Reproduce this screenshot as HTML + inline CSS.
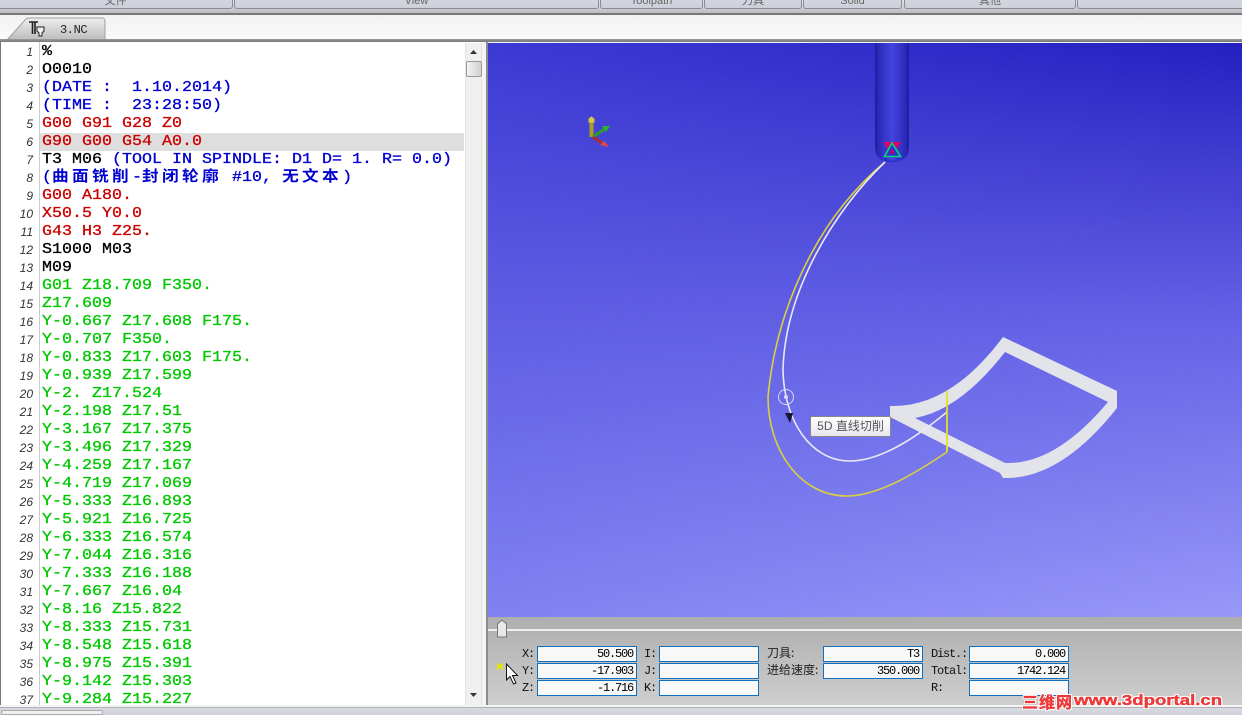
<!DOCTYPE html>
<html><head><meta charset="utf-8"><style>
html,body{margin:0;padding:0;background:#f0f0f0}
#r{position:relative;width:1242px;height:715px;overflow:hidden;background:#f4f4f4;font-family:"Liberation Sans","Noto Sans CJK SC",sans-serif}
.a{position:absolute}
.b{position:absolute;top:-8px;height:15px;background:linear-gradient(#d8dae2,#cdd0da);border:1px solid #8a8c94;border-radius:0 0 3px 3px;box-sizing:content-box;text-align:center;font-size:11px;line-height:17px;color:#666;overflow:hidden}
#code{position:absolute;left:42px;top:43px;width:382px;font:15px/18px "Liberation Mono","Noto Sans CJK SC",monospace;white-space:pre;-webkit-text-stroke:.3px currentColor;transform:scaleX(1.111);transform-origin:0 0}
#code div{height:18px}
.k{color:#000}.u{color:#0000d0}.e{color:#cc0000}.g{color:#00c800}
.cj{font-size:15px;letter-spacing:3px;font-weight:700;-webkit-text-stroke:0}
#nums{position:absolute;left:0;top:43px;width:33px;text-align:right;font:italic 12px/18px "Liberation Sans",sans-serif;color:#333}
.f{position:absolute;box-sizing:border-box;height:16px;border:1.5px solid #1070c0;background:#f8f8f8;font:12px/14px "Liberation Mono","Noto Sans CJK SC",monospace;letter-spacing:-1.2px;text-align:right;padding-right:3px;color:#000;overflow:hidden}
.l{position:absolute;font:12px/14px "Liberation Mono","Noto Sans CJK SC",monospace;letter-spacing:-1.2px;color:#111;white-space:pre}
.lc{font:12px/14px "Noto Sans CJK SC",sans-serif;letter-spacing:0;color:#222}
.w{position:absolute;font-weight:bold;color:#f03c3c;-webkit-text-stroke:.3px #e01818;text-shadow:1px 0 #fff,-1px 0 #fff,0 1px #fff,0 -1px #fff,1px 1px #fff,-1px -1px #fff,1px -1px #fff,-1px 1px #fff;white-space:nowrap}
</style></head><body><div id="r">

<!-- top toolbar -->
<div class="a" style="left:0;top:0;width:1242px;height:14px;background:linear-gradient(#e6e6ea,#b8b8be)"></div>
<div class="b" style="left:-2px;width:233px">文件</div>
<div class="b" style="left:234px;width:363px">View</div>
<div class="b" style="left:600px;width:101px">Toolpath</div>
<div class="b" style="left:704px;width:96px">刀具</div>
<div class="b" style="left:803px;width:97px">Solid</div>
<div class="b" style="left:904px;width:170px">其他</div>
<div class="b" style="left:1077px;width:170px"></div>
<div class="a" style="left:0;top:13px;width:1242px;height:2px;background:#777"></div>

<!-- tab strip -->
<div class="a" style="left:0;top:15px;width:1242px;height:25px;background:linear-gradient(#f2f2f2,#fafafa)"></div>
<svg class="a" style="left:0;top:15px" width="110" height="27"><defs><linearGradient id="tb" x1="0" x2="0" y1="0" y2="1"><stop offset="0" stop-color="#eeeeee"/><stop offset="1" stop-color="#bcbcbc"/></linearGradient></defs><path d="M7 25 L26 4 Q27 3 30 3 L102 3 Q105 3 105 6 L105 25 Z" fill="url(#tb)" stroke="#a0a0a4"/>
<path d="M29 7h9M32.500 7v12M35 7v12" stroke="#222" stroke-width="1.600" fill="none"/><path d="M37 12h7v4l-2 2v3h-3v-3l-2-2z" fill="#eee" stroke="#222"/></svg>
<div class="a" style="left:60px;top:23px;font:12px/14px 'Liberation Mono',monospace;letter-spacing:-.4px;color:#222">3.NC</div>
<div class="a" style="left:0;top:39px;width:1242px;height:3px;background:linear-gradient(#999,#777)"></div>

<!-- left editor -->
<div class="a" style="left:0;top:42px;width:482px;height:665px;background:#fff"></div>
<div class="a" style="left:0;top:42px;width:1px;height:665px;background:#777"></div>
<div class="a" style="left:39px;top:42px;width:1px;height:665px;background:#ccc"></div>
<div class="a" style="left:40px;top:133px;width:424px;height:18px;background:#dedede"></div>

<div id="nums">1<br>2<br>3<br>4<br>5<br>6<br>7<br>8<br>9<br>10<br>11<br>12<br>13<br>14<br>15<br>16<br>17<br>18<br>19<br>20<br>21<br>22<br>23<br>24<br>25<br>26<br>27<br>28<br>29<br>30<br>31<br>32<br>33<br>34<br>35<br>36<br>37</div>

<div id="code"><div class="k">%</div><div class="k">O0010</div><div class="u">(DATE :  1.10.2014)</div><div class="u">(TIME :  23:28:50)</div><div class="e">G00 G91 G28 Z0</div><div class="e">G90 G00 G54 A0.0</div><div class="k">T3 M06 <span class="u">(TOOL IN SPINDLE: D1 D= 1. R= 0.0)</span></div><div class="u">(<span class="cj">曲面铣削</span>-<span class="cj">封闭轮廓</span> #10, <span class="cj">无文本</span>)</div><div class="e">G00 A180.</div><div class="e">X50.5 Y0.0</div><div class="e">G43 H3 Z25.</div><div class="k">S1000 M03</div><div class="k">M09</div><div class="g">G01 Z18.709 F350.</div><div class="g">Z17.609</div><div class="g">Y-0.667 Z17.608 F175.</div><div class="g">Y-0.707 F350.</div><div class="g">Y-0.833 Z17.603 F175.</div><div class="g">Y-0.939 Z17.599</div><div class="g">Y-2. Z17.524</div><div class="g">Y-2.198 Z17.51</div><div class="g">Y-3.167 Z17.375</div><div class="g">Y-3.496 Z17.329</div><div class="g">Y-4.259 Z17.167</div><div class="g">Y-4.719 Z17.069</div><div class="g">Y-5.333 Z16.893</div><div class="g">Y-5.921 Z16.725</div><div class="g">Y-6.333 Z16.574</div><div class="g">Y-7.044 Z16.316</div><div class="g">Y-7.333 Z16.188</div><div class="g">Y-7.667 Z16.04</div><div class="g">Y-8.16 Z15.822</div><div class="g">Y-8.333 Z15.731</div><div class="g">Y-8.548 Z15.618</div><div class="g">Y-8.975 Z15.391</div><div class="g">Y-9.142 Z15.303</div><div class="g" style="height:15px;overflow:hidden">Y-9.284 Z15.227</div></div>

<!-- scrollbar -->
<div class="a" style="left:465px;top:43px;width:17px;height:664px;background:#f0f0f0;border-left:1px solid #e4e4e4;border-right:1px solid #e4e4e4;box-sizing:border-box"></div>
<div class="a" style="left:466px;top:61px;width:14px;height:14px;border:1px solid #999;border-radius:2px;background:linear-gradient(90deg,#f4f4f4,#d0d0d0)"></div>
<svg class="a" style="left:465px;top:45px" width="17" height="12"><path d="M5 9h7l-3.500-4z" fill="#333"/></svg>
<svg class="a" style="left:465px;top:690px" width="17" height="12"><path d="M5 3h7l-3.500 4z" fill="#333"/></svg>
<div class="a" style="left:482px;top:42px;width:5px;height:665px;background:#f4f4f4"></div>
<div class="a" style="left:486px;top:42px;width:2px;height:665px;background:#8c8c8c"></div>

<!-- 3D viewport -->
<div class="a" style="left:488px;top:43px;width:754px;height:574px;background:linear-gradient(#3c3ad4,#5a59e2 40%,#8082f2)"></div>
<div class="a" style="left:488px;top:43px;width:754px;height:574px;background:linear-gradient(#2420c0,#6664e6 50%,#9898f8);-webkit-mask-image:linear-gradient(90deg,transparent,#000);mask-image:linear-gradient(90deg,transparent,#000)"></div>

<svg class="a" style="left:488px;top:43px" width="754" height="574" viewBox="488 43 754 574">
<defs><linearGradient id="t" x1="0" x2="1" y1="0" y2="0"><stop offset="0" stop-color="#1c1c9c"/><stop offset=".1" stop-color="#2a2ab8"/><stop offset=".5" stop-color="#4444e0"/><stop offset=".9" stop-color="#2a2ab8"/><stop offset="1" stop-color="#1c1c9c"/></linearGradient></defs>
<!-- tool -->
<path d="M875 43H909V146Q909 162 893 162H891Q875 162 875 146Z" fill="url(#t)"/>
<path d="M883 142H901L892 156Z" fill="#e0006a"/>
<path d="M892 143L884.500 156.500H900.500Z" fill="#3030d0" stroke="#00d878" stroke-width="1.600"/>
<circle cx="892" cy="152" r="2" fill="#c00060"/>
<path d="M884 158Q892 165 900 158" stroke="#2a30d0" stroke-width="1.500" fill="none"/>
<!-- axes -->
<path d="M591.500 137V122" stroke="#a8a020" stroke-width="4"/><path d="M589 122V119L591.500 117L594 119V122Z" fill="#d8c848" stroke="#d8c848"/>
<path d="M593 137L606 128" stroke="#2aa02a" stroke-width="3"/><path d="M602 126L610 126L606 132Z" fill="#30b030"/>
<path d="M593 137L605 145" stroke="#b02c2c" stroke-width="3"/><path d="M600 145L609 147L604 141Z" fill="#e04848"/>
<!-- workpiece -->
<path fill-rule="evenodd" d="M890 406Q950 408 1003 337L1117 391V408Q1060 480 1003 478L1000 473L890 417Z M915 418Q960 410 1005 352L1108 402Q1055 465 1005 463Z" fill="#e3e3ea"/>
<!-- paths -->
<path d="M885 162C810 225 775 320 768 397C768 450 800 496 847 496C880 496 920 470 947 452" fill="none" stroke="#d8d040" stroke-width="1.600"/>
<path d="M885 162C835 210 785 290 783 370C784 420 810 461 850 461C885 461 925 430 947 412" fill="none" stroke="#e8e8f4" stroke-width="1.600"/>
<path d="M947 391V452" stroke="#e4e020" stroke-width="1.800"/>
<circle cx="786" cy="397" r="7.500" fill="none" stroke="#d8d8f4" stroke-width="1"/><circle cx="786" cy="397" r="2" fill="#d8d8f4"/>
<path d="M785 413H793L790 423Z" fill="#151530"/>
</svg>

<!-- tooltip -->
<div class="a" style="left:810px;top:416px;width:79px;height:19px;border:1px solid #888;border-radius:2px;background:linear-gradient(#fff,#e6e6f2);font-size:12px;line-height:19px;color:#555;text-align:center;white-space:nowrap">5D 直线切削</div>

<!-- bottom panel -->
<div class="a" style="left:488px;top:617px;width:754px;height:88px;background:linear-gradient(#aeaeae,#cecece)"></div>
<div class="a" style="left:488px;top:629px;width:754px;height:2px;background:#f0f0f0"></div>
<svg class="a" style="left:495px;top:618px" width="16" height="22"><path d="M2.500 6L7 2L11.500 6V19H2.500Z" fill="#e8e8e8" stroke="#777"/></svg>

<div class="l" style="left:522px;top:647px">X:</div><div class="f" style="left:537px;top:646px;width:100px">50.500</div>
<div class="l" style="left:522px;top:664px">Y:</div><div class="f" style="left:537px;top:663px;width:100px">-17.903</div>
<div class="l" style="left:522px;top:681px">Z:</div><div class="f" style="left:537px;top:680px;width:100px">-1.716</div>
<div class="l" style="left:644px;top:647px">I:</div><div class="f" style="left:659px;top:646px;width:100px"></div>
<div class="l" style="left:644px;top:664px">J:</div><div class="f" style="left:659px;top:663px;width:100px"></div>
<div class="l" style="left:644px;top:681px">K:</div><div class="f" style="left:659px;top:680px;width:100px"></div>
<div class="l lc" style="left:767px;top:646px">刀具:</div><div class="f" style="left:823px;top:646px;width:100px">T3</div>
<div class="l lc" style="left:767px;top:663px">进给速度:</div><div class="f" style="left:823px;top:663px;width:100px">350.000</div>
<div class="l" style="left:931px;top:647px">Dist.:</div><div class="f" style="left:969px;top:646px;width:100px">0.000</div>
<div class="l" style="left:931px;top:664px">Total:</div><div class="f" style="left:969px;top:663px;width:100px">1742.124</div>
<div class="l" style="left:931px;top:681px">R:</div><div class="f" style="left:969px;top:680px;width:100px"></div>

<!-- cursor -->
<svg class="a" style="left:494px;top:660px" width="30" height="26"><path d="M3 4L9 9M9 4L3 9" stroke="#e4e400" stroke-width="2.200"/><path d="M12.500 4V20L16 16.500L19.500 24L22 23L18.500 15.500H23.500Z" fill="#fff" stroke="#111"/></svg>

<!-- bottom status -->
<div class="a" style="left:0;top:705px;width:1242px;height:2px;background:#f4f4f4"></div>
<div class="a" style="left:0;top:707px;width:1242px;height:8px;background:linear-gradient(#8a8a90 0,#d8dae2 1px,#cfd1da)"></div>
<div class="a" style="left:1px;top:710px;width:102px;height:5px;background:#f0f0f0;border:1px solid #aaa;border-radius:2px;box-sizing:border-box"></div>

<!-- watermark -->
<div class="w" style="left:1022px;top:694px;font-size:16px;line-height:15px;letter-spacing:1px;font-family:'Noto Sans CJK SC',sans-serif">三维网</div>
<div class="w" style="left:1074px;top:693px;font-size:15px;line-height:15px;font-family:'Liberation Sans',sans-serif;transform:scaleX(1.24);transform-origin:0 0">www.3dportal.cn</div>
</div></body></html>
